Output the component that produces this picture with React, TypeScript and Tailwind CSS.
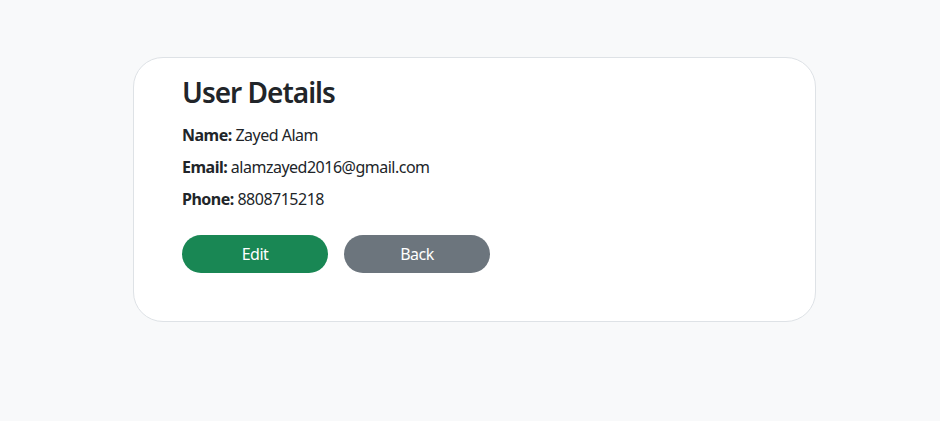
export default function App() {
  return (
    <div
      className="min-h-[421px] w-full bg-[#f8f9fa] pt-[57px] text-[#212529]"
      style={{ fontFamily: '"Noto Sans", sans-serif' }}
    >
      <div className="ml-[133px] w-[683px] rounded-[30px] border border-[#dee2e6] bg-white pl-[48px] pr-[48px] pt-[17px] pb-[48px]">
        <h2 className="text-[28px] font-semibold leading-[34px] tracking-[-1px]">User Details</h2>
        <div className="mt-[14px] flex flex-col gap-[8px] text-[16px] leading-[24px] tracking-[-0.5px]">
          <p>
            <span className="font-bold">Name:</span> Zayed Alam
          </p>
          <p>
            <span className="font-bold">Email:</span> alamzayed2016@gmail.com
          </p>
          <p>
            <span className="font-bold">Phone:</span> 8808715218
          </p>
        </div>
        <div className="mt-[24px] flex gap-[16px]">
          <button className="h-[38px] w-[146px] rounded-full bg-[#198754] text-[16px] tracking-[-0.5px] text-white">
            Edit
          </button>
          <button className="h-[38px] w-[146px] rounded-full bg-[#6c757d] text-[16px] tracking-[-0.5px] text-white">
            Back
          </button>
        </div>
      </div>
    </div>
  );
}
